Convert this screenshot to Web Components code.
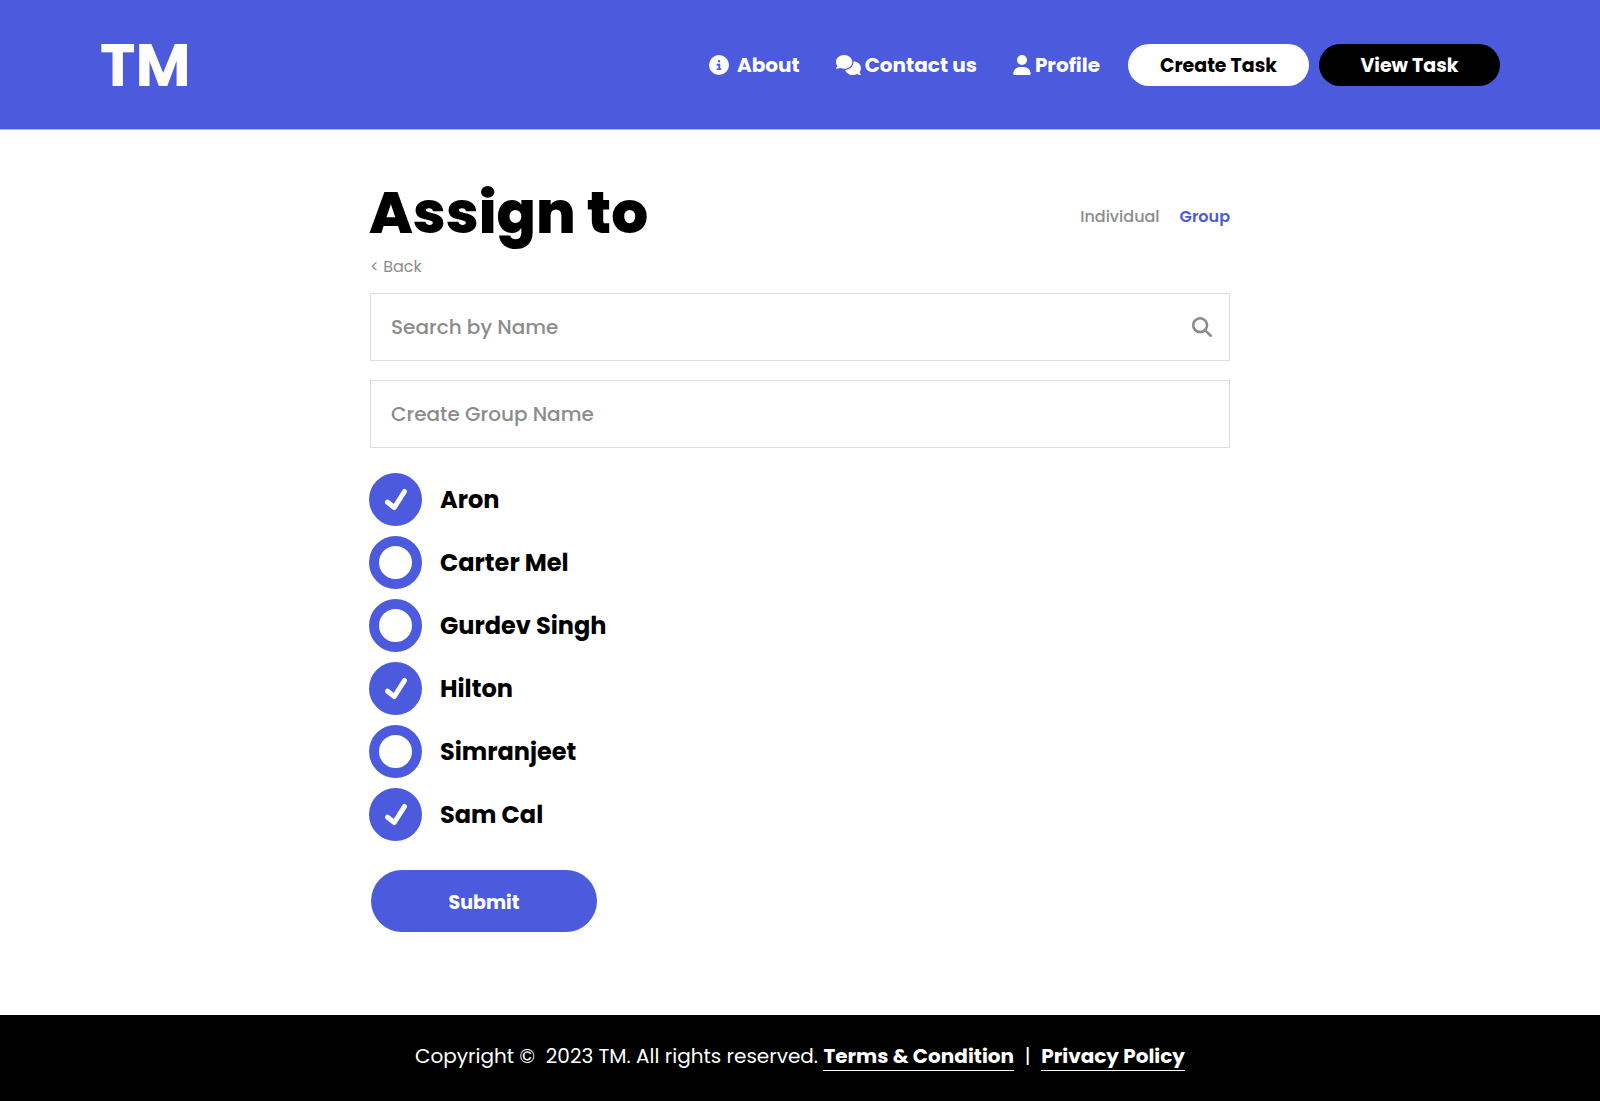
<!DOCTYPE html>
<html lang="en">
<head>
<meta charset="utf-8">
<meta name="viewport" content="width=device-width, initial-scale=1">
<title>TM - Assign to</title>
<style>
  :root { --brand: #4c5bdd; --muted: #8c8c8c; --line: #dedede; }
  body { margin: 0; font-family: Poppins, Inter, "Liberation Sans", sans-serif; color: #000; background: #fff; }
</style>
</head>
<body>
<tm-page>
  <tm-header slot="header">
    <tm-nav-link icon="info" style="--icon-gap: 8px">About</tm-nav-link>
    <tm-nav-link icon="chat">Contact us</tm-nav-link>
    <tm-nav-link icon="user">Profile</tm-nav-link>
    <tm-button slot="actions" variant="light">Create Task</tm-button>
    <tm-button slot="actions" variant="dark">View Task</tm-button>
  </tm-header>
  <tm-assign></tm-assign>
  <tm-footer slot="footer"></tm-footer>
</tm-page>

<script>
const define = (name, render) => customElements.define(name, class extends HTMLElement {
  connectedCallback() {
    if (this.shadowRoot) return;
    const root = this.attachShadow({ mode: "open" });
    root.innerHTML = "<style>*{box-sizing:border-box}</style>" + render(this);
  }
});

const icons = {
  info: `<svg width="20" height="20" viewBox="0 0 512 512"><path fill="currentColor" d="M256 512A256 256 0 1 0 256 0a256 256 0 1 0 0 512zM216 336h24V272H216c-13.300 0-24-10.700-24-24s10.700-24 24-24h48c13.300 0 24 10.700 24 24v88h8c13.300 0 24 10.700 24 24s-10.700 24-24 24H216c-13.300 0-24-10.700-24-24s10.700-24 24-24zm40-208a32 32 0 1 1 0 64 32 32 0 1 1 0-64z"/></svg>`,
  chat: `<svg width="25" height="20" viewBox="0 0 640 512"><path fill="currentColor" d="M208 352c114.900 0 208-78.800 208-176S322.900 0 208 0S0 78.800 0 176c0 38.600 14.700 74.300 39.600 103.400c-3.500 9.400-8.700 17.700-14.200 24.700c-4.800 6.200-9.700 11-13.300 14.300c-1.800 1.600-3.300 2.900-4.300 3.700c-.5 .4-.9 .7-1.100 .8l-.2 .2C1 327.200-1.400 334.400 .8 340.900S9.100 352 16 352c21.800 0 43.800-5.600 62.100-12.500c9.200-3.500 17.800-7.400 25.200-11.400C134.100 343.300 169.800 352 208 352zM448 176c0 112.300-99.100 196.900-216.500 207C255.800 457.400 336.400 512 432 512c38.200 0 73.900-8.700 104.700-23.900c7.500 4 16 7.900 25.200 11.400c18.300 6.900 40.300 12.500 62.100 12.500c6.900 0 13.100-4.500 15.200-11.100c2.100-6.600-.2-13.800-5.800-17.900l-.2-.2c-.2-.2-.6-.4-1.100-.8c-1-.8-2.500-2-4.300-3.700c-3.600-3.300-8.500-8.100-13.300-14.300c-5.500-7-10.700-15.400-14.200-24.700c24.900-29 39.600-64.700 39.600-103.400c0-92.800-84.900-168.900-192.600-175.500c.4 5.100 .6 10.300 .6 15.500z"/></svg>`,
  user: `<svg width="18" height="20" viewBox="0 0 448 512"><path fill="currentColor" d="M224 256A128 128 0 1 0 224 0a128 128 0 1 0 0 256zm-45.700 48C79.800 304 0 383.800 0 482.300C0 498.700 13.300 512 29.700 512H418.300c16.400 0 29.700-13.300 29.700-29.700C448 383.800 368.200 304 269.700 304H178.300z"/></svg>`,
  search: `<svg width="20" height="20" viewBox="0 0 512 512"><path fill="currentColor" d="M416 208c0 45.900-14.900 88.300-40 122.700L502.600 457.400c12.500 12.500 12.500 32.800 0 45.300s-32.800 12.500-45.300 0L330.700 376c-34.400 25.200-76.800 40-122.700 40C93.100 416 0 322.900 0 208S93.100 0 208 0S416 93.100 416 208zM208 352a144 144 0 1 0 0-288 144 144 0 1 0 0 288z"/></svg>`
};

define("tm-page", () => `
  <style>
    :host { display: flex; flex-direction: column; min-height: 100vh; }
    main { flex: 1; width: 100%; max-width: 902px; margin: 0 auto; padding: 47px 20px 83px; }
  </style>
  <slot name="header"></slot>
  <main><slot></slot></main>
  <slot name="footer"></slot>`);

define("tm-header", () => `
  <style>
    :host { display: block; background: var(--brand); border-bottom: 1px solid #b0b6f0; }
    header { display: flex; align-items: center; justify-content: space-between; padding: 44px 100px 43px; }
    .logo { font-size: 60px; font-weight: 700; line-height: 42px; color: #fff; text-decoration: none; }
    .right { display: flex; align-items: center; gap: 28px; }
    nav { display: flex; gap: 36px; }
    .actions { display: flex; gap: 10px; }
  </style>
  <header>
    <a class="logo" href="#">TM</a>
    <div class="right">
      <nav><slot></slot></nav>
      <div class="actions"><slot name="actions"></slot></div>
    </div>
  </header>`);

define("tm-nav-link", el => `
  <style>
    :host { display: block; }
    a { display: flex; align-items: center; gap: var(--icon-gap, 4px); color: #fff; font-size: 20px; font-weight: 700; line-height: 30px; text-decoration: none; white-space: nowrap; }
    svg { display: block; }
  </style>
  <a href="#">${icons[el.getAttribute("icon")]}<span><slot></slot></span></a>`);

define("tm-button", () => `
  <style>
    :host { display: block; }
    button { display: block; width: 181px; height: 42px; padding: 0; border: 0; border-radius: 31px; background: var(--brand); color: #fff; font: inherit; font-size: 19px; font-weight: 700; cursor: pointer; }
    :host([variant="light"]) button { background: #fff; color: #000; }
    :host([variant="dark"]) button { background: #000; }
    :host([variant="submit"]) button { width: 226px; height: 62px; padding-top: 2px; }
  </style>
  <button type="button"><slot></slot></button>`);

define("tm-field", el => `
  <style>
    :host { display: block; }
    .box { display: flex; align-items: center; height: 68px; padding: 0 17px 0 20px; border: 1px solid var(--line); color: var(--muted); }
    input { flex: 1; min-width: 0; height: 100%; padding: 0; border: 0; outline: 0; background: none; color: #000; font: inherit; font-size: 20px; font-weight: 500; }
    input::placeholder { color: var(--muted); opacity: 1; }
  </style>
  <div class="box">
    <input type="text" aria-label="${el.getAttribute("label")}" placeholder="${el.getAttribute("label")}">
    ${icons[el.getAttribute("icon")] || ""}
  </div>`);

define("tm-check", el => `
  <style>
    :host { display: block; }
    label { display: flex; width: fit-content; align-items: center; gap: 18px; font-size: 24px; font-weight: 700; line-height: 36px; cursor: pointer; }
    .mark { display: grid; width: 53px; height: 53px; }
    .mark > * { grid-area: 1 / 1; }
    input { appearance: none; width: 53px; height: 53px; margin: 0; border: 10px solid var(--brand); border-radius: 50%; background: #fff; }
    input:checked { background: var(--brand); }
    svg { display: none; pointer-events: none; }
    input:checked + svg { display: block; }
  </style>
  <label>
    <span class="mark">
      <input type="checkbox" ${el.hasAttribute("checked") ? "checked" : ""}>
      <svg width="53" height="53" viewBox="0 0 53 53"><path d="M18.500 29.200L25.300 34.500L35.500 18.500" fill="none" stroke="#fff" stroke-width="5" stroke-linecap="round" stroke-linejoin="round"/></svg>
    </span>
    <slot></slot>
  </label>`);

define("tm-assign", () => `
  <style>
    :host { display: block; }
    .top { display: flex; align-items: center; justify-content: space-between; }
    h1 { margin: 0; font-size: 58px; font-weight: 800; line-height: 72px; }
    .tabs { display: flex; gap: 20px; padding: 8px 1px 0; font-size: 16px; line-height: 24px; }
    a { color: var(--muted); text-decoration: none; }
    .tabs a { font-weight: 500; }
    .tabs a[aria-current] { color: var(--brand); font-weight: 600; }
    .back { display: inline-block; margin: 6px 1px 14px; font-size: 16px; line-height: 24px; }
    .fields { display: grid; gap: 19px; padding: 0 1px; }
    .people { display: grid; gap: 10px; margin: 25px 0 29px; }
    tm-button { padding-left: 2px; }
  </style>
  <div class="top">
    <h1>Assign to</h1>
    <nav class="tabs"><a href="#">Individual</a><a href="#" aria-current="page">Group</a></nav>
  </div>
  <a class="back" href="#">&lt; Back</a>
  <div class="fields">
    <tm-field label="Search by Name" icon="search"></tm-field>
    <tm-field label="Create Group Name"></tm-field>
  </div>
  <div class="people">
    <tm-check checked>Aron</tm-check>
    <tm-check>Carter Mel</tm-check>
    <tm-check>Gurdev Singh</tm-check>
    <tm-check checked>Hilton</tm-check>
    <tm-check>Simranjeet</tm-check>
    <tm-check checked>Sam Cal</tm-check>
  </div>
  <tm-button variant="submit">Submit</tm-button>`);

define("tm-footer", () => `
  <style>
    :host { display: block; padding: 26px 20px 30px; background: #000; color: #fff; text-align: center; font-size: 20px; line-height: 30px; }
    a { display: inline-block; line-height: 28px; color: inherit; font-weight: 700; text-decoration: none; border-bottom: 1px solid #fff; }
  </style>
  Copyright ©&nbsp; 2023 TM. All rights reserved. <a href="#">Terms &amp; Condition</a>&nbsp; |&nbsp; <a href="#">Privacy Policy</a>`);
</script>
</body>
</html>
